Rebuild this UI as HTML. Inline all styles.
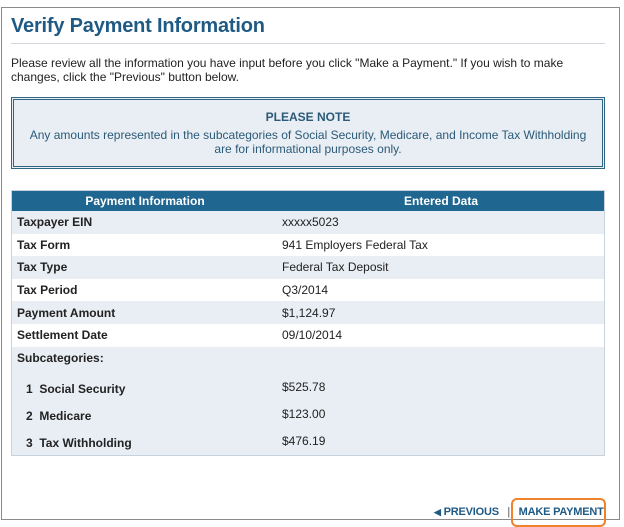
<!DOCTYPE html>
<html><head><style>
body{margin:0;width:624px;height:524px;background:#fff;font-family:"Liberation Sans",Arial,sans-serif;position:relative;overflow:hidden}
.frame{position:absolute;left:1px;top:7px;width:617px;height:511px;border:1px solid #8a8a8a}
h1{position:absolute;left:11px;top:15px;margin:0;font-size:20px;font-weight:bold;color:#1f5a85;letter-spacing:-0.2px}
.rule{position:absolute;left:11px;top:43px;width:594px;height:1px;background:#d0d6dc}
p.intro{position:absolute;left:11px;top:56px;margin:0;width:590px;font-size:12px;line-height:14px;color:#222}
.note{position:absolute;left:11px;top:97px;width:588px;height:66px;border:3px double #2f6684;background:#e8eef4;text-align:center;color:#2b5a78;font-size:12px;line-height:14px}
.note b{display:block;margin-top:10px;margin-bottom:4px;font-size:12px}
table{position:absolute;left:11px;top:190px;width:594px;border-collapse:collapse;font-size:12px;color:#222;border:1px solid #c8d2dc}
th{background:#1f6690;color:#fff;height:20px;font-weight:bold;padding:0}
td{height:22.6px;padding:0 0 0 5px}
td.v{padding-left:4px}
tr.l td{background:#e9eef4}
td.k{font-weight:bold}
.sub td{height:16px;padding-top:11px;vertical-align:top}
.sub td.k{padding-top:13px;height:14px}
.sub.last td{padding-bottom:5px}
.btns{position:absolute;top:506px;left:434px;font-size:11px;font-weight:bold;color:#1f5a85;letter-spacing:-0.2px;white-space:nowrap}
.orange{position:absolute;left:511px;top:498px;width:91px;height:25px;border:2px solid #f0822c;border-radius:6px}
</style></head><body>
<div class="frame"></div>
<h1>Verify Payment Information</h1>
<div class="rule"></div>
<p class="intro">Please review all the information you have input before you click "Make a Payment." If you wish to make changes, click the "Previous" button below.</p>
<div class="note"><b>PLEASE NOTE</b>Any amounts represented in the subcategories of Social Security, Medicare, and Income Tax Withholding<br>are for informational purposes only.</div>
<table>
<tr><th style="width:266px">Payment Information</th><th>Entered Data</th></tr>
<tr class="l"><td class="k">Taxpayer EIN</td><td class="v">xxxxx5023</td></tr>
<tr><td class="k">Tax Form</td><td class="v">941 Employers Federal Tax</td></tr>
<tr class="l"><td class="k">Tax Type</td><td class="v">Federal Tax Deposit</td></tr>
<tr><td class="k">Tax Period</td><td class="v">Q3/2014</td></tr>
<tr class="l"><td class="k">Payment Amount</td><td class="v">$1,124.97</td></tr>
<tr><td class="k">Settlement Date</td><td class="v">09/10/2014</td></tr>
<tr class="l"><td class="k" style="height:22px">Subcategories:</td><td></td></tr>
<tr class="l sub"><td class="k" style="padding-left:14px">1&nbsp; Social Security</td><td class="v">$525.78</td></tr>
<tr class="l sub"><td class="k" style="padding-left:14px">2&nbsp; Medicare</td><td class="v">$123.00</td></tr>
<tr class="l sub last"><td class="k" style="padding-left:14px">3&nbsp; Tax Withholding</td><td class="v">$476.19</td></tr>
</table>
<div class="btns"><span style="font-size:9px">&#9664;</span> PREVIOUS &nbsp;&nbsp;<span style="font-weight:normal;color:#555">|</span>&nbsp;&nbsp; MAKE PAYMENT</div>
<div class="orange"></div>
</body></html>
